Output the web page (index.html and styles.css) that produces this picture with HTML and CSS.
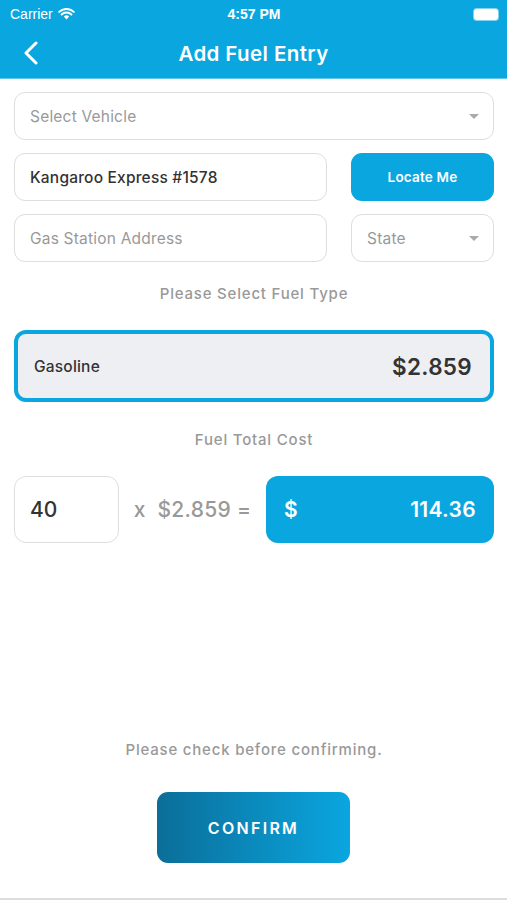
FILE: index.html
```html
<!DOCTYPE html>
<html lang="en">

<head>
    <meta charset="UTF-8">
    <meta name="viewport" content="width=device-width, initial-scale=1.0">
    <title>Add Fuel Entry</title>
    <link rel="stylesheet" href="styles.css">
</head>

<body>
    <header class="top">
        <div class="status">
            <span class="carrier">Carrier
                <svg width="17" height="12" viewBox="0 0 17 12">
                    <path d="M8.5 11.5 L5.8 8.6 A3.9 3.9 0 0 1 11.2 8.6 Z" fill="#fff"/>
                    <path d="M3.6 6.5 A7 7 0 0 1 13.4 6.5" stroke="#fff" stroke-width="2" fill="none" stroke-linecap="round"/>
                    <path d="M1.2 3.9 A10.5 10.5 0 0 1 15.8 3.9" stroke="#fff" stroke-width="2" fill="none" stroke-linecap="round"/>
                </svg>
            </span>
            <span class="time">4:57 PM</span>
            <span class="battery"><span class="battery-fill"></span></span>
        </div>
        <div class="navbar">
            <svg class="back" width="14" height="24" viewBox="0 0 14 24">
                <path d="M12 2 L2 12 L12 22" stroke="#fff" stroke-width="3" fill="none" stroke-linecap="round" stroke-linejoin="round"/>
            </svg>
            <h1>Add Fuel Entry</h1>
        </div>
    </header>

    <main class="form">
        <div class="field select-field">
            <span class="placeholder">Select Vehicle</span>
            <span class="caret"></span>
        </div>

        <div class="row">
            <div class="field wide">
                <span class="value">Kangaroo Express #1578</span>
            </div>
            <button class="locate">Locate Me</button>
        </div>

        <div class="row">
            <div class="field wide">
                <span class="placeholder">Gas Station Address</span>
            </div>
            <div class="field state select-field">
                <span class="placeholder">State</span>
                <span class="caret"></span>
            </div>
        </div>

        <p class="label fuel-label">Please Select Fuel Type</p>

        <div class="fuel-option">
            <span class="fuel-name">Gasoline</span>
            <span class="fuel-price">$2.859</span>
        </div>

        <p class="label cost-label">Fuel Total Cost</p>

        <div class="cost-row">
            <div class="qty">40</div>
            <div class="times">x&nbsp; $2.859 =</div>
            <div class="total">
                <span>$</span>
                <span>114.36</span>
            </div>
        </div>

        <p class="label check">Please check before confirming.</p>

        <button class="confirm">CONFIRM</button>
    </main>
</body>

</html>
```

FILE: styles.css
```css
body {
    font-family: 'Inter', sans-serif;
    margin: 0;
    padding: 0;
    width: 507px;
    height: 900px;
    background: #fff;
    color: #333;
    overflow: hidden;
    box-sizing: border-box;
    border-bottom: 2px solid #dcdcdc;
}

.top {
    background: #0aa6e0;
    height: 78px;
    border-bottom: 1px solid #5fc6ec;
    color: #fff;
}

.status {
    display: flex;
    align-items: center;
    justify-content: space-between;
    height: 28px;
    padding: 0 9px 0 10px;
    font-size: 14px;
    font-family: 'Liberation Sans', sans-serif;
}

.carrier {
    display: flex;
    align-items: center;
    gap: 5px;
    width: 120px;
}

.time {
    font-size: 14px;
    font-weight: bold;
}

.battery {
    width: 120px;
    display: flex;
    justify-content: flex-end;
}

.battery-fill {
    display: block;
    width: 24px;
    height: 11px;
    background: #fff;
    border-radius: 3px;
    box-shadow: 0 0 0 1px rgba(255, 255, 255, 0.5);
}

.navbar {
    display: flex;
    align-items: center;
    justify-content: center;
    height: 50px;
    position: relative;
}

.back {
    position: absolute;
    left: 24px;
    top: 13px;
}

h1 {
    margin: 0;
    font-size: 20.5px;
    font-weight: 600;
    letter-spacing: 0.4px;
}

.form {
    padding: 13px 13px 0 14px;
    display: flex;
    flex-direction: column;
}

.field {
    height: 48px;
    border: 1px solid #dedede;
    border-radius: 11px;
    box-sizing: border-box;
    display: flex;
    align-items: center;
    justify-content: space-between;
    padding: 0 14px 0 15px;
    font-size: 15.5px;
    letter-spacing: 0.2px;
}

.placeholder {
    color: #999;
}

.value {
    color: #333;
    font-weight: 500;
}

.caret {
    width: 0;
    height: 0;
    border-left: 5px solid transparent;
    border-right: 5px solid transparent;
    border-top: 5px solid #aaa;
}

.row {
    display: flex;
    justify-content: space-between;
    margin-top: 13px;
}

.wide {
    width: 313px;
}

.state {
    width: 143px;
}

.locate {
    width: 143px;
    height: 48px;
    border: none;
    border-radius: 11px;
    background: #0aa6e0;
    color: #fff;
    font-family: 'Inter', sans-serif;
    font-size: 13.5px;
    font-weight: 600;
    letter-spacing: 0.2px;
}

.label {
    text-align: center;
    color: #999;
    font-size: 15px;
    font-weight: 500;
    margin: 0;
    letter-spacing: 0.8px;
}

.fuel-label {
    margin-top: 22px;
}

.fuel-option {
    margin-top: 27px;
    height: 72px;
    border: 4px solid #0aa6e0;
    border-radius: 12px;
    background: #eeeff3;
    box-sizing: border-box;
    display: flex;
    align-items: center;
    justify-content: space-between;
    padding: 0 18px 0 16px;
}

.fuel-name {
    font-size: 15.5px;
    font-weight: 500;
    letter-spacing: 0.2px;
}

.fuel-price {
    font-size: 22.5px;
    font-weight: 600;
    color: #333;
    letter-spacing: 0.3px;
}

.cost-label {
    margin-top: 28px;
}

.cost-row {
    display: flex;
    align-items: center;
    margin-top: 27px;
}

.qty {
    width: 105px;
    height: 67px;
    border: 1px solid #dedede;
    border-radius: 12px;
    box-sizing: border-box;
    display: flex;
    align-items: center;
    padding-left: 15px;
    font-size: 21px;
    font-weight: 500;
}

.times {
    flex: 1;
    text-align: center;
    color: #999;
    font-size: 21px;
    font-weight: 500;
    letter-spacing: 0.3px;
}

.total {
    width: 228px;
    height: 67px;
    border-radius: 12px;
    background: #0aa6e0;
    color: #fff;
    display: flex;
    align-items: center;
    justify-content: space-between;
    padding: 0 18px 0 18px;
    box-sizing: border-box;
    font-size: 21px;
    font-weight: 600;
    letter-spacing: 0.3px;
}

.check {
    margin-top: 197px;
}

.confirm {
    align-self: center;
    margin-top: 33px;
    margin-right: 1px;
    width: 193px;
    height: 71px;
    border: none;
    border-radius: 11px;
    background: linear-gradient(to right, #0b6e99, #0aa6e0);
    color: #fff;
    font-family: 'Inter', sans-serif;
    font-size: 16px;
    font-weight: 600;
    letter-spacing: 2.3px;
}
```
